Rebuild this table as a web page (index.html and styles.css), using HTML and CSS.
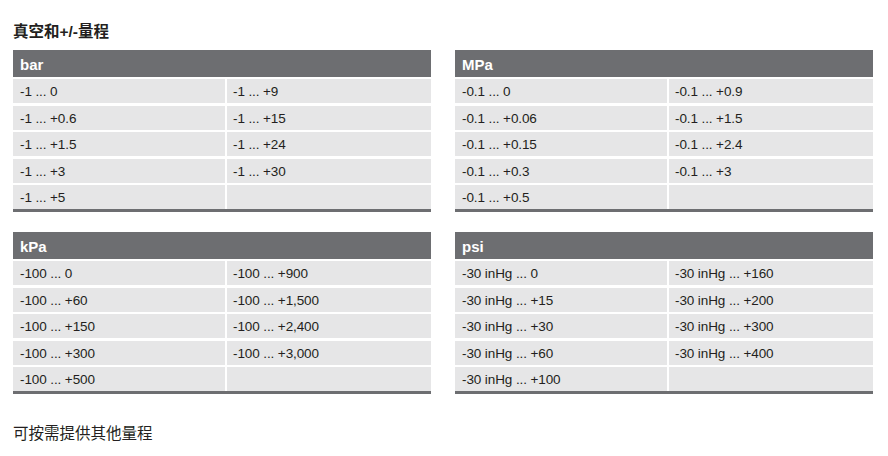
FILE: index.html
```html
<!DOCTYPE html>
<html lang="zh">
<head>
<meta charset="utf-8">
<link rel="stylesheet" href="styles.css">
</head>
<body>
<div class="page">
  <h2 class="title">真空和+/-量程</h2>
  <div class="tables">
    <div class="tbl">
      <div class="head">bar</div>
      <div class="cells">
        <div class="c">-1 ... 0</div><div class="c">-1 ... +9</div>
        <div class="c">-1 ... +0.6</div><div class="c">-1 ... +15</div>
        <div class="c">-1 ... +1.5</div><div class="c">-1 ... +24</div>
        <div class="c">-1 ... +3</div><div class="c">-1 ... +30</div>
        <div class="c">-1 ... +5</div><div class="c"></div>
      </div>
    </div>
    <div class="tbl">
      <div class="head">MPa</div>
      <div class="cells">
        <div class="c">-0.1 ... 0</div><div class="c">-0.1 ... +0.9</div>
        <div class="c">-0.1 ... +0.06</div><div class="c">-0.1 ... +1.5</div>
        <div class="c">-0.1 ... +0.15</div><div class="c">-0.1 ... +2.4</div>
        <div class="c">-0.1 ... +0.3</div><div class="c">-0.1 ... +3</div>
        <div class="c">-0.1 ... +0.5</div><div class="c"></div>
      </div>
    </div>
    <div class="tbl">
      <div class="head">kPa</div>
      <div class="cells">
        <div class="c">-100 ... 0</div><div class="c">-100 ... +900</div>
        <div class="c">-100 ... +60</div><div class="c">-100 ... +1,500</div>
        <div class="c">-100 ... +150</div><div class="c">-100 ... +2,400</div>
        <div class="c">-100 ... +300</div><div class="c">-100 ... +3,000</div>
        <div class="c">-100 ... +500</div><div class="c"></div>
      </div>
    </div>
    <div class="tbl">
      <div class="head">psi</div>
      <div class="cells">
        <div class="c">-30 inHg ... 0</div><div class="c">-30 inHg ... +160</div>
        <div class="c">-30 inHg ... +15</div><div class="c">-30 inHg ... +200</div>
        <div class="c">-30 inHg ... +30</div><div class="c">-30 inHg ... +300</div>
        <div class="c">-30 inHg ... +60</div><div class="c">-30 inHg ... +400</div>
        <div class="c">-30 inHg ... +100</div><div class="c"></div>
      </div>
    </div>
  </div>
  <p class="note">可按需提供其他量程</p>
</div>
</body>
</html>
```
FILE: styles.css
```css
html, body {
  margin: 0;
  padding: 0;
  background: #fff;
}
.page {
  padding: 23px 0 0 13px;
  font-family: "Liberation Sans", Arial, "Noto Sans CJK SC", sans-serif;
  color: #231f20;
}
.title {
  margin: 0;
  font-family: "Liberation Sans", "Noto Sans CJK SC", sans-serif;
  font-size: 15.5px;
  line-height: 18px;
  font-weight: bold;
  color: #231f20;
}
.tables {
  margin-top: 9px;
  display: grid;
  grid-template-columns: 418px 418px;
  column-gap: 24px;
  row-gap: 20px;
}
.tbl {
  display: flex;
  flex-direction: column;
  gap: 2px;
}
.head {
  background: #6d6e71;
  color: #fff;
  font-weight: bold;
  font-size: 15px;
  height: 27px;
  line-height: 29px;
  padding-left: 7px;
}
.cells {
  display: grid;
  grid-template-columns: 212px 204px;
  grid-auto-rows: 24px;
  column-gap: 2px;
  row-gap: 2.5px;
  border-bottom: 3px solid #6d6e71;
}
.c {
  background: #e6e6e7;
  font-size: 13.5px;
  line-height: 26px;
  padding-left: 7px;
  color: #231f20;
  letter-spacing: -0.1px;
}
.cells .c:nth-child(even) {
  padding-left: 6px;
}
.note {
  margin: 28px 0 0;
  font-family: "Noto Sans CJK SC", sans-serif;
  font-size: 15.5px;
  line-height: 20px;
  color: #231f20;
}
```
